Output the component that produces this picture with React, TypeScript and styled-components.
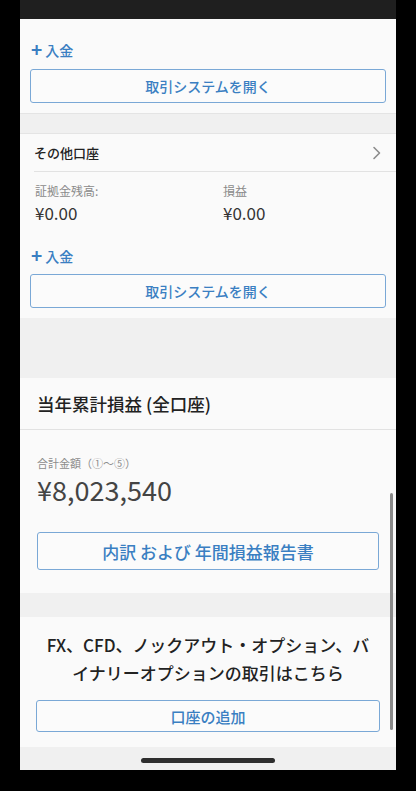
import React from "react";
import styled, { createGlobalStyle } from "styled-components";

const Global = createGlobalStyle`
  html, body { margin: 0; padding: 0; background: #000; }
  body { font-family: "Noto Sans CJK JP", "Noto Sans", sans-serif; }
  * { box-sizing: border-box; }
`;

const Frame = styled.div`
  width: 416px;
  height: 791px;
  background: #000;
  overflow: hidden;
`;

const Screen = styled.div`
  position: relative;
  margin: 0 20px;
  width: 376px;
  height: 770px;
  overflow: hidden;
  display: flex;
  flex-direction: column;
  background: #f0f0f0;
`;

const StatusBar = styled.div`
  flex: none;
  height: 19px;
  background: #1f1f1f;
`;

const Section = styled.section<{ $pt?: number; $pb?: number; $px?: number }>`
  flex: none;
  background: #fafafa;
  display: flex;
  flex-direction: column;
  padding: ${(p) => p.$pt ?? 0}px ${(p) => p.$px ?? 10}px ${(p) => p.$pb ?? 0}px;
`;

const Gap = styled.div<{ $h: number; $lines?: boolean }>`
  flex: none;
  height: ${(p) => p.$h}px;
  background: #f0f0f0;
  border-top: ${(p) => (p.$lines ? "1px solid #e4e4e4" : "none")};
  border-bottom: ${(p) => (p.$lines ? "1px solid #e4e4e4" : "none")};
`;

const DepositLink = styled.a`
  display: flex;
  align-items: center;
  gap: 3px;
  height: 20px;
  color: #3a7fc2;
  font-size: 14px;
  font-weight: 500;
  text-decoration: none;
  padding-left: 1px;
`;

const Plus = styled.span`
  font-size: 19px;
  font-weight: 700;
  line-height: 20px;
  margin-top: -2px;
`;

const OutlineButton = styled.button<{ $h: number; $fs: number; $mt: number }>`
  flex: none;
  height: ${(p) => p.$h}px;
  margin-top: ${(p) => p.$mt}px;
  width: 100%;
  border: 1px solid #7aa8d6;
  border-radius: 3px;
  background: #fbfbfb;
  color: #3a7fc2;
  font-family: "Noto Sans CJK JP", "Noto Sans", sans-serif;
  font-size: ${(p) => p.$fs}px;
  font-weight: 500;
  display: flex;
  align-items: center;
  justify-content: center;
  padding: 0;
`;

const AccountHeader = styled.div`
  height: 38px;
  margin-left: 14px;
  padding-right: 14px;
  display: flex;
  align-items: center;
  justify-content: space-between;
  border-bottom: 1px solid #e2e2e2;
  font-size: 13px;
  font-weight: 500;
  color: #222;
`;

const Stats = styled.div`
  display: grid;
  grid-template-columns: 188px 1fr;
  padding: 10px 15px 0;
`;

const StatLabel = styled.div`
  font-size: 12px;
  color: #8a8a8a;
  line-height: 18px;
`;

const StatValue = styled.div`
  font-size: 17px;
  color: #333;
  line-height: 24px;
  margin-top: 1px;
`;

const Title = styled.h2`
  flex: none;
  margin: 0;
  height: 52px;
  display: flex;
  align-items: center;
  padding-left: 17px;
  font-size: 17.5px;
  font-weight: 500;
  color: #222;
  border-bottom: 1px solid #e2e2e2;
  background: #fafafa;
`;

const TotalLabel = styled.div`
  font-size: 11px;
  color: #8c8c8c;
  line-height: 16px;
`;

const TotalValue = styled.div`
  font-size: 27px;
  color: #444;
  line-height: 36px;
  margin-top: 1px;
`;

const Promo = styled.p`
  margin: 0;
  text-align: center;
  font-size: 17px;
  font-weight: 500;
  line-height: 28px;
  color: #222;
`;

const HomeIndicator = styled.div`
  position: absolute;
  left: 121px;
  top: 758px;
  width: 134px;
  height: 5px;
  border-radius: 3px;
  background: #2e2e2e;
`;

const Scrollbar = styled.div`
  position: absolute;
  left: 370px;
  top: 493px;
  width: 3px;
  height: 237px;
  border-radius: 2px;
  background: #8a8a8a;
`;

const Chevron = () => (
  <svg width="10" height="14" viewBox="0 0 10 14" fill="none">
    <path d="M2 1.5 L7.5 7 L2 12.5" stroke="#8c8c8c" strokeWidth="1.6" strokeLinecap="round" strokeLinejoin="round" />
  </svg>
);

const Deposit = () => (
  <DepositLink>
    <Plus>+</Plus>入金
  </DepositLink>
);

export default function App() {
  return (
    <>
      <Global />
      <Frame>
        <Screen>
          <StatusBar />
          <Section $pt={21} $pb={10}>
            <Deposit />
            <OutlineButton $h={34} $fs={14} $mt={9}>取引システムを開く</OutlineButton>
          </Section>
          <Gap $h={21} $lines />
          <Section $px={0} $pb={10}>
            <AccountHeader>
              その他口座
              <Chevron />
            </AccountHeader>
            <Stats>
              <div>
                <StatLabel>証拠金残高:</StatLabel>
                <StatValue>¥0.00</StatValue>
              </div>
              <div>
                <StatLabel>損益</StatLabel>
                <StatValue>¥0.00</StatValue>
              </div>
            </Stats>
            <Section $pt={21} $px={10}>
              <Deposit />
              <OutlineButton $h={34} $fs={14} $mt={8}>取引システムを開く</OutlineButton>
            </Section>
          </Section>
          <Gap $h={60} />
          <Title>当年累計損益 (全口座)</Title>
          <Section $pt={25} $px={17} $pb={23}>
            <TotalLabel>合計金額（①〜⑤）</TotalLabel>
            <TotalValue>¥8,023,540</TotalValue>
            <OutlineButton $h={38} $fs={17} $mt={24}>内訳 および 年間損益報告書</OutlineButton>
          </Section>
          <Gap $h={24} />
          <Section $pt={14} $px={16} $pb={15}>
            <Promo>
              FX、CFD、ノックアウト・オプション、バ
              <br />
              イナリーオプションの取引はこちら
            </Promo>
            <OutlineButton $h={32} $fs={15} $mt={13}>口座の追加</OutlineButton>
          </Section>
          <Gap $h={23} />
          <Scrollbar />
          <HomeIndicator />
        </Screen>
      </Frame>
    </>
  );
}
